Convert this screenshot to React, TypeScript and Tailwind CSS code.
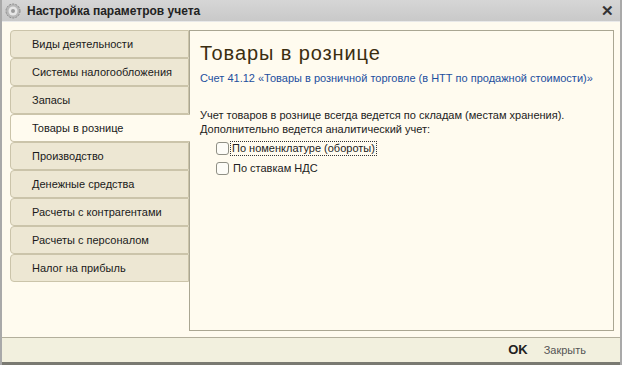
import { useState } from 'react'

const tabs = [
  'Виды деятельности',
  'Системы налогообложения',
  'Запасы',
  'Товары в рознице',
  'Производство',
  'Денежные средства',
  'Расчеты с контрагентами',
  'Расчеты с персоналом',
  'Налог на прибыль',
]

function GearIcon() {
  return (
    <svg width="16" height="16" viewBox="0 0 16 16">
      <circle cx="8" cy="8" r="7" fill="#b8b8b8" stroke="#8a8a8a" strokeWidth="1" strokeDasharray="2 1.2" />
      <circle cx="8" cy="8" r="4.5" fill="#e6e6e6" />
      <circle cx="8" cy="8" r="2" fill="#9a9a9a" />
    </svg>
  )
}

function Checkbox({ label, focused }: { label: string; focused?: boolean }) {
  const [checked, setChecked] = useState(false)
  return (
    <label className="flex items-center h-[20px] cursor-default select-none" onClick={() => setChecked(!checked)}>
      <span className="w-[13px] h-[13px] rounded-[3px] border border-[#8f8f84] bg-[#fdfcf7] flex items-center justify-center">
        {checked && <span className="text-[10px] leading-none text-[#333]">✓</span>}
      </span>
      <span
        className={
          focused
            ? 'ml-[1px] px-[1px] border border-dotted border-[#333] leading-[13px]'
            : 'ml-[2px] px-[1px] leading-[13px] border border-transparent'
        }
      >
        {label}
      </span>
    </label>
  )
}

export default function App() {
  const [active, setActive] = useState(3)

  return (
    <div
      className="w-[622px] h-[365px] flex flex-col bg-[#fffbef] border-l-2 border-r-2 border-[#a9a9a9] text-[#1a1a1a] overflow-hidden"
      style={{ fontFamily: '"Liberation Sans", Arial, sans-serif' }}
    >
      {/* title bar */}
      <div className="h-[22px] flex items-center bg-gradient-to-b from-[#d6d6d6] to-[#c9c9c9] border-b border-[#e9e9e9] pl-[3px] pr-[6px]">
        <GearIcon />
        <span className="ml-[6px] text-[12px] font-bold text-[#222]">Настройка параметров учета</span>
        <span className="ml-auto text-[15px] font-bold text-[#333] leading-none">✕</span>
      </div>

      {/* body */}
      <div className="flex pt-[8px] pl-[8px] pr-[6px] h-[307px]">
        <div className="w-[179px] flex flex-col shrink-0">
          {tabs.map((t, i) => (
            <div
              key={t}
              onClick={() => setActive(i)}
              className={
                i === active
                  ? 'h-[28px] flex items-center pl-[21px] text-[11px] bg-[#fffbef] border border-r-0 border-[#cbc4aa] rounded-l-[4px] -mr-px relative z-10'
                  : 'h-[28px] flex items-center pl-[21px] text-[11px] bg-[#ede7d3] border border-[#cbc4aa] rounded-l-[4px]'
              }
            >
              {t}
            </div>
          ))}
        </div>
        <div className="flex-1 border border-[#aaa692] bg-[#fffbef] pl-[10px] pt-[10px] mb-[-2px]">
          <div className="text-[20px] tracking-[0.9px] text-[#3b2e10] leading-[24px]">Товары в рознице</div>
          <div className="mt-[6px] text-[11px] text-[#1d4f9e] leading-[14px]">
            Счет 41.12 «Товары в розничной торговле (в НТТ по продажной стоимости)»
          </div>
          <div className="mt-[23px] text-[11px] leading-[14px] text-[#222]">
            <div>Учет товаров в рознице всегда ведется по складам (местам хранения).</div>
            <div>Дополнительно ведется аналитический учет:</div>
          </div>
          <div className="mt-[2px] pl-[16px] text-[11px] text-[#222]">
            <Checkbox label="По номенклатуре (обороты)" focused />
            <Checkbox label="По ставкам НДС" />
          </div>
        </div>
      </div>

      {/* footer */}
      <div className="mt-auto h-[28px] bg-[#f2f0de] border-t border-[#b3af9c] border-b-[3px] border-b-[#7a7a72] flex items-center justify-end pr-[34px] gap-[16px] text-[11px]">
        <span className="font-bold text-[13px] text-[#222]">OK</span>
        <span className="text-[#555]">Закрыть</span>
      </div>
    </div>
  )
}
